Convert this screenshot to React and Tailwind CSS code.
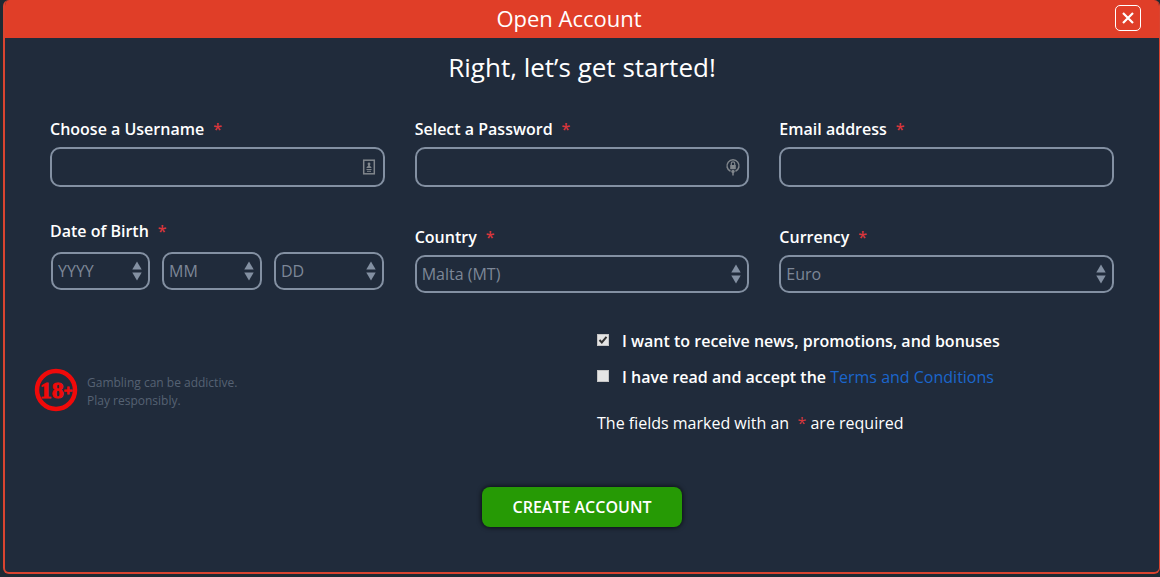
import React, { useState } from "react";

const RequiredMark = () => <span className="text-[#d9363c]">*</span>;

const FieldLabel = ({ htmlFor, children }) => (
  <label
    htmlFor={htmlFor}
    className="flex h-6 items-center gap-[9px] text-base font-semibold text-white"
  >
    {children}
    <RequiredMark />
  </label>
);

const SortArrows = () => (
  <svg
    className="pointer-events-none absolute right-2 top-1/2 -translate-y-1/2"
    width="10"
    height="20"
    viewBox="0 0 10 20"
    fill="#8390a2"
    aria-hidden="true"
  >
    <path d="M5 0.500l4.700 8h-9.400z" />
    <path d="M5 19.500l4.700-8h-9.400z" />
  </svg>
);

const SelectBox = ({ id, label, options, className = "" }) => (
  <div className={`relative ${className}`}>
    <select
      id={id}
      aria-label={label}
      className="block h-[38px] w-full appearance-none rounded-[10px] border-2 border-[#8390a2] bg-transparent px-[5px] text-base text-[#7d8797] outline-none"
    >
      {options.map((option) => (
        <option key={option}>{option}</option>
      ))}
    </select>
    <SortArrows />
  </div>
);

const TextBox = ({ id, type = "text", icon }) => (
  <div className="relative">
    <input
      id={id}
      type={type}
      className="block h-10 w-full rounded-[10px] border-2 border-[#8390a2] bg-transparent px-2 text-base text-white outline-none"
    />
    {icon && (
      <span className="pointer-events-none absolute right-2 top-1/2 -translate-y-1/2">
        {icon}
      </span>
    )}
  </div>
);

const ContactIcon = () => (
  <svg width="16" height="16" viewBox="0 0 16 16" fill="none" aria-hidden="true">
    <rect x="2.700" y="1.200" width="10.600" height="13.600" stroke="#80868c" strokeWidth="1.500" />
    <circle cx="8" cy="5" r="1.400" fill="#80868c" />
    <path d="M7.200 5h1.600v1.600l2 2.400H5.200l2-2.400z" fill="#80868c" />
    <path d="M5.500 10.500h5M6 12.300h4" stroke="#80868c" />
  </svg>
);

const PasswordIcon = () => (
  <svg width="16" height="18" viewBox="0 0 16 18" fill="none" aria-hidden="true">
    <path d="M5.500 13.300A6 6 0 1 1 10.500 13.300" stroke="#80868c" strokeWidth="1.500" />
    <rect x="5.200" y="7" width="5.600" height="4.200" fill="#80868c" />
    <path d="M6.300 7V5.500a1.700 1.700 0 0 1 3.400 0V7" stroke="#80868c" strokeWidth="1.200" />
    <circle cx="8" cy="13.500" r="1.700" fill="#80868c" />
    <path d="M8 14v3.500" stroke="#80868c" strokeWidth="1.500" />
  </svg>
);

const AgeBadge = () => (
  <svg width="44" height="44" viewBox="0 0 44 44" role="img" aria-label="18+">
    <circle cx="22" cy="22" r="19" fill="none" stroke="#f00a0a" strokeWidth="4.500" />
    <text
      x="22"
      y="30"
      textAnchor="middle"
      fontFamily="'Liberation Serif', serif"
      fontWeight="700"
      fontSize="24"
      fill="#f00a0a"
      stroke="#f00a0a"
      strokeWidth="0.8"
    >
      18
      <tspan fontSize="15" dy="-3" strokeWidth="1.2">
        +
      </tspan>
    </text>
  </svg>
);

const CheckRow = ({ id, checked, onChange, children }) => (
  <div className="flex h-9 items-center">
    <span className="relative flex size-3 -translate-y-px">
      <input
        id={id}
        type="checkbox"
        checked={checked}
        onChange={onChange}
        className="size-3 appearance-none border border-[#c4c4c4] bg-[#e4e4e4]"
      />
      {checked && (
        <svg
          className="pointer-events-none absolute inset-0"
          width="12"
          height="12"
          viewBox="0 0 12 12"
          fill="none"
          stroke="#333"
          strokeWidth="2"
          aria-hidden="true"
        >
          <path d="M2.500 6l2.300 2.500L9.500 2.800" />
        </svg>
      )}
    </span>
    <label htmlFor={id} className="ml-[13px] font-semibold">
      {children}
    </label>
  </div>
);

const years = ["YYYY", "2000", "1999", "1998"];
const months = ["MM", "01", "02", "03"];
const days = ["DD", "01", "02", "03"];

const App = () => {
  const [news, setNews] = useState(true);
  const [terms, setTerms] = useState(false);

  return (
    <div className="min-h-screen bg-[#1e2a33] pb-[3px] pl-[3px] font-['Open_Sans','Noto_Sans',sans-serif] text-white">
      <div className="flex min-h-[calc(100vh-3px)] flex-col overflow-hidden rounded-md border-2 border-r border-t-0 border-[#d94430] bg-[#202b3b]">
        <header className="grid h-[38px] grid-cols-[1fr_auto_1fr] items-center bg-[#e03e28] pr-[18px]">
          <h1 className="col-start-2 pb-[2px] pr-2 text-[22px] leading-8">Open Account</h1>
          <button
            type="button"
            aria-label="Close"
            className="mb-[2px] flex size-[26px] items-center justify-center justify-self-end rounded-[5px] border border-white"
          >
            <svg
              width="12"
              height="12"
              viewBox="0 0 12 12"
              stroke="white"
              strokeWidth="2.200"
              aria-hidden="true"
            >
              <path d="M1 1l10 10M11 1L1 11" />
            </svg>
          </button>
        </header>

        <form
          className="flex flex-1 flex-col px-[45px]"
          onSubmit={(e) => e.preventDefault()}
        >
          <h2 className="mt-[11px] text-center text-[26px] leading-9">
            Right, let’s get started!
          </h2>

          <div className="mt-8 grid grid-cols-3 gap-x-[30px]">
            <div className="space-y-[6px]">
              <FieldLabel htmlFor="username">Choose a Username</FieldLabel>
              <TextBox id="username" icon={<ContactIcon />} />
            </div>
            <div className="space-y-[6px]">
              <FieldLabel htmlFor="password">Select a Password</FieldLabel>
              <TextBox id="password" type="password" icon={<PasswordIcon />} />
            </div>
            <div className="space-y-[6px]">
              <FieldLabel htmlFor="email">Email address</FieldLabel>
              <TextBox id="email" type="email" />
            </div>
          </div>

          <div className="mt-8 grid grid-cols-3 gap-x-[30px]">
            <div>
              <FieldLabel htmlFor="year">Date of Birth</FieldLabel>
              <div className="mt-[9px] flex gap-3 px-px">
                <SelectBox id="year" label="Year" options={years} className="w-[99px]" />
                <SelectBox id="month" label="Month" options={months} className="w-[100px]" />
                <SelectBox id="day" label="Day" options={days} className="flex-1" />
              </div>
            </div>
            <div className="space-y-[6px] pt-[6px]">
              <FieldLabel htmlFor="country">Country</FieldLabel>
              <SelectBox id="country" label="Country" options={["Malta (MT)"]} />
            </div>
            <div className="space-y-[6px] pt-[6px]">
              <FieldLabel htmlFor="currency">Currency</FieldLabel>
              <SelectBox id="currency" label="Currency" options={["Euro"]} />
            </div>
          </div>

          <div className="mt-[30px] grid grid-cols-2 gap-x-[30px]">
            <div className="-ml-4 mt-[45px] flex items-start gap-[9px]">
              <AgeBadge />
              <p className="mt-[6px] text-xs leading-[18px] text-[#566273]">
                Gambling can be addictive.
                <br />
                Play responsibly.
              </p>
            </div>
            <div>
              <CheckRow id="news" checked={news} onChange={() => setNews(!news)}>
                I want to receive news, promotions, and bonuses
              </CheckRow>
              <CheckRow id="terms" checked={terms} onChange={() => setTerms(!terms)}>
                I have read and accept the{" "}
                <a href="#terms" className="font-normal text-[#1b66cc]">
                  Terms and Conditions
                </a>
              </CheckRow>
              <p className="mt-4">
                The fields marked with an &nbsp;<RequiredMark /> are required
              </p>
            </div>
          </div>

          <button
            type="submit"
            className="mx-auto mb-11 mt-[52px] h-10 w-[200px] rounded-lg bg-[#269a05] font-semibold shadow-[0_0_4px_1px_rgba(0,0,0,0.6)]"
          >
            CREATE ACCOUNT
          </button>
        </form>
      </div>
    </div>
  );
};

export default App;
